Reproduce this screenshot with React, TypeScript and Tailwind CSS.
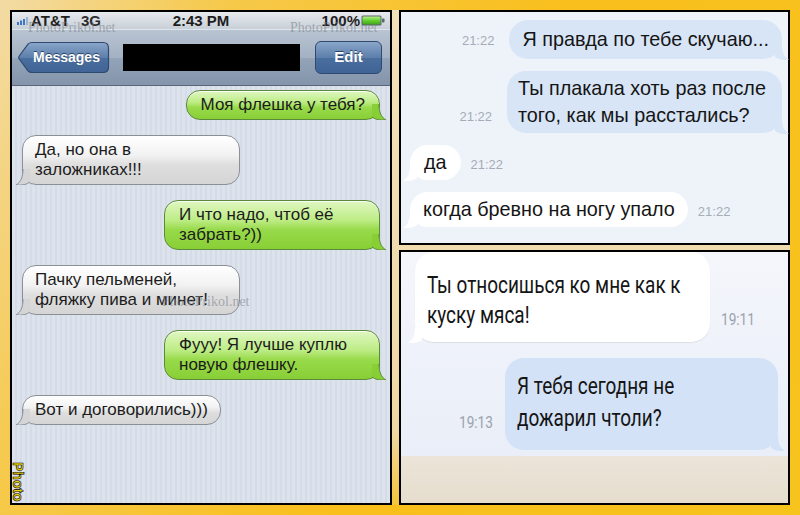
import React from 'react'

type Side = 'in' | 'out'

function Tail({ color, stroke, side }: { color: string; stroke?: string; side: Side }) {
    return (
        <svg
            viewBox="0 0 14 16"
            className={
                side === 'out'
                    ? 'pointer-events-none absolute right-[-7px] bottom-[-1px] h-[16px] w-[14px]'
                    : 'pointer-events-none absolute left-[-7px] bottom-[-1px] h-[16px] w-[14px] -scale-x-100'
            }
        >
            <path d="M0 0 H7 C7 8 9 13 14 16 C8 16.5 3 15.5 0 13 Z" fill={color} />
            {stroke && (
                <path d="M7 0 C7 8 9 13 14 16 C8 16.5 3 15.5 0 13" fill="none" stroke={stroke} strokeWidth="1" />
            )}
        </svg>
    )
}

function SignalBars() {
    return (
        <svg viewBox="0 0 12 8" className="h-[8px] w-[12px]">
            <rect x="0" y="5" width="2" height="3" fill="#3f76c6" />
            <rect x="3" y="3.5" width="2" height="4.5" fill="#3f76c6" />
            <rect x="6" y="2" width="2" height="6" fill="#3f76c6" />
            <rect x="9" y="0" width="2" height="8" fill="#9db3cf" />
        </svg>
    )
}

function Battery() {
    return (
        <svg viewBox="0 0 24 11" className="h-[11px] w-[24px]">
            <defs>
                <linearGradient id="bat" x1="0" y1="0" x2="0" y2="1">
                    <stop offset="0" stopColor="#b6f08a" />
                    <stop offset="0.5" stopColor="#63cf2e" />
                    <stop offset="1" stopColor="#3fa51a" />
                </linearGradient>
            </defs>
            <rect x="0.5" y="0.5" width="20" height="10" rx="1.5" fill="#5b6470" />
            <rect x="1.5" y="1.5" width="18" height="8" rx="1" fill="url(#bat)" />
            <rect x="21" y="3.5" width="2.5" height="4" rx="0.8" fill="#5b6470" />
        </svg>
    )
}

function BackButton() {
    return (
        <div className="relative h-[33px] w-[93px]">
            <svg viewBox="0 0 93 33" className="absolute inset-0 h-[33px] w-[93px]">
                <defs>
                    <linearGradient id="navbtn" x1="0" y1="0" x2="0" y2="1">
                        <stop offset="0" stopColor="#8aa6ca" />
                        <stop offset="0.5" stopColor="#5d7fab" />
                        <stop offset="0.52" stopColor="#4a6e9e" />
                        <stop offset="1" stopColor="#3f6495" />
                    </linearGradient>
                </defs>
                <path
                    d="M15 1.5 H86 Q91.5 1.5 91.5 7 V26 Q91.5 31.5 86 31.5 H15 Q12.5 31.5 11 29.8 L2.2 18 Q1 16.5 2.2 15 L11 3.2 Q12.5 1.5 15 1.5 Z"
                    fill="url(#navbtn)"
                    stroke="#2e4a70"
                    strokeWidth="1.2"
                />
            </svg>
            <span className="relative flex h-full items-center pl-[16px] text-[14px] font-bold text-white [text-shadow:0_-1px_0_#2a4366]">
                Messages
            </span>
        </div>
    )
}

function IosBubble({ side, w, children }: { side: Side; w?: string; children: React.ReactNode }) {
    if (side === 'out') {
        return (
            <div
                className={`relative mr-[10px] self-end rounded-[14px] border border-[#5c8a3c] bg-[linear-gradient(180deg,#e0f7c2_0%,#bdec85_40%,#98da4a_60%,#88cf36_100%)] px-[14px] py-[4px] text-[17px] leading-[20px] text-[#1c1c1c] shadow-[inset_0_1px_0_rgba(255,255,255,0.8)] ${w ?? ''}`}
            >
                {children}
                <Tail side="out" color="#88cf36" stroke="#5c8a3c" />
            </div>
        )
    }
    return (
        <div
            className={`relative ml-[10px] self-start rounded-[14px] border border-[#8b9097] bg-[linear-gradient(180deg,#ffffff_0%,#f2f2f2_40%,#dedede_60%,#d5d5d5_100%)] px-[12px] py-[4px] text-[17px] leading-[20px] text-[#1c1c1c] shadow-[inset_0_1px_0_#fff] ${w ?? ''}`}
        >
            {children}
            <Tail side="in" color="#d5d5d5" stroke="#8b9097" />
        </div>
    )
}

function Watermark({ className }: { className: string }) {
    return (
        <span
            className={`pointer-events-none absolute font-['Liberation_Serif',serif] text-[14px] leading-none text-[#7d838c]/60 ${className}`}
        >
            PhotoPrikol.net
        </span>
    )
}

function IphonePanel() {
    return (
        <div className="relative flex h-[495px] w-[382px] flex-col overflow-hidden border-2 border-black font-['Liberation_Sans',Arial,sans-serif]">
            <div className="grid h-[17px] grid-cols-3 items-center bg-[linear-gradient(180deg,#e7eaee,#c8cfd7)] px-[5px] text-[15px] leading-none font-bold text-[#1d1d1d]">
                <div className="flex items-center gap-[2px]">
                    <SignalBars />
                    <span>AT&amp;T</span>
                    <span className="ml-[9px] text-[#2c2c2c]">3G</span>
                </div>
                <div className="text-center">2:43 PM</div>
                <div className="flex items-center justify-end gap-[1px]">
                    <span>100%</span>
                    <Battery />
                </div>
            </div>
            <div className="flex h-[57px] items-center border-t border-b border-t-[#dfe5ec] border-b-[#56677e] bg-[linear-gradient(180deg,#b9c4d2_0%,#a3b1c3_50%,#93a3b8_52%,#8495ab_100%)] pl-[5px]">
                <BackButton />
                <div className="ml-[13px] h-[27px] w-[177px] bg-black" />
                <div className="ml-[15px] flex h-[33px] w-[67px] items-center justify-center rounded-[6px] border border-[#2e4a70] bg-[linear-gradient(180deg,#8aa6ca_0%,#5d7fab_50%,#4a6e9e_52%,#3f6495_100%)] text-[15px] font-bold text-white [text-shadow:0_-1px_0_#2a4366]">
                    Edit
                </div>
            </div>
            <div className="relative flex flex-1 flex-col gap-[15px] bg-[repeating-linear-gradient(90deg,#dce3ed_0px,#dce3ed_3px,#d5dce7_3px,#d5dce7_5px)] pt-[4px]">
                <IosBubble side="out">Моя флешка у тебя?</IosBubble>
                <IosBubble side="in" w="w-[218px]">
                    Да, но она в<br />заложниках!!!
                </IosBubble>
                <IosBubble side="out" w="w-[216px]">
                    И что надо, чтоб её<br />забрать?))
                </IosBubble>
                <IosBubble side="in" w="w-[218px]">
                    Пачку пельменей,<br />фляжку пива и минет!
                </IosBubble>
                <IosBubble side="out" w="w-[216px]">
                    Фууу! Я лучше куплю<br />новую флешку.
                </IosBubble>
                <IosBubble side="in">Вот и договорились)))</IosBubble>
                <span className="absolute bottom-[1px] left-0 text-[14px] leading-[12px] font-bold text-[#f2d400] [writing-mode:vertical-rl] [-webkit-text-stroke:0.6px_#000]">
                    Photo
                </span>
            </div>
            <Watermark className="top-[9px] left-[16px]" />
            <Watermark className="top-[9px] left-[278px]" />
            <Watermark className="top-[283px] left-[150px] text-[13px]" />
        </div>
    )
}

function ChatBubble({ side, className, tail, children }: { side: Side; className: string; tail: string; children: React.ReactNode }) {
    return (
        <div className={`relative rounded-[19px] text-[#151515] ${className}`}>
            {children}
            <Tail side={side} color={tail} />
        </div>
    )
}

function Time({ className, children }: { className: string; children: React.ReactNode }) {
    return <span className={`leading-none ${className}`}>{children}</span>
}

function TopPanel() {
    const time = 'text-[13px] text-[#a6acb5]'
    return (
        <div className="flex h-[235px] flex-col gap-[12px] border-2 border-black bg-[#eef3fa] pt-[8px] pr-[6px] pl-[9px] font-['Liberation_Sans',Arial,sans-serif] text-[19.8px]">
            <div className="flex items-end justify-end gap-[15px]">
                <Time className={`${time} mb-[12px]`}>21:22</Time>
                <ChatBubble side="out" tail="#d8e5f6" className="bg-[#d8e5f6] px-[13px] py-[8px] leading-[23px]">
                    Я правда по тебе скучаю...
                </ChatBubble>
            </div>
            <div className="flex items-end justify-end gap-[15px]">
                <Time className={`${time} mb-[10px]`}>21:22</Time>
                <ChatBubble side="out" tail="#d8e5f6" className="w-[275px] bg-[#d8e5f6] px-[11px] py-[4px] leading-[27px]">
                    Ты плакала хоть раз после
                    <br />
                    того, как мы расстались?
                </ChatBubble>
            </div>
            <div className="flex items-end gap-[10px]">
                <ChatBubble side="in" tail="#ffffff" className="bg-white px-[14px] py-[6px] leading-[23px]">
                    да
                </ChatBubble>
                <Time className={`${time} mb-[9px]`}>21:22</Time>
            </div>
            <div className="flex items-end gap-[10px]">
                <ChatBubble side="in" tail="#ffffff" className="bg-white px-[13px] py-[6px] leading-[23px]">
                    когда бревно на ногу упало
                </ChatBubble>
                <Time className={`${time} mb-[9px]`}>21:22</Time>
            </div>
        </div>
    )
}

function BottomPanel() {
    const time = 'text-[16px] text-[#9ba2ac] origin-center scale-x-[0.85]'
    const cond = 'origin-left scale-x-[0.79] whitespace-nowrap'
    return (
        <div className="flex h-[255px] flex-col border-2 border-black font-['Roboto','Liberation_Sans',sans-serif]">
            <div className="flex flex-1 flex-col gap-[16px] bg-[linear-gradient(180deg,#f4f6fb_0%,#e9eef8_100%)] pt-[0px] pr-[10px] pl-[14px] text-[24px] text-[#141414]">
                <div className="flex items-end gap-[8px]">
                    <ChatBubble side="in" tail="#ffffff" className="h-[90px] w-[295px] bg-white pt-[18px] pl-[12px] leading-[30px] shadow-[0_1px_1px_rgba(0,0,0,0.08)]">
                        <div className={cond}>
                            Ты относишься ко мне как к
                            <br />
                            куску мяса!
                        </div>
                    </ChatBubble>
                    <Time className={`${time} mb-[14px]`}>19:11</Time>
                </div>
                <div className="flex items-end justify-end gap-[9px]">
                    <Time className={`${time} mb-[19px]`}>19:13</Time>
                    <ChatBubble side="out" tail="#d3e2f6" className="h-[92px] w-[273px] bg-[#d3e2f6] pt-[12px] pl-[12px] leading-[32px]">
                        <div className={cond}>
                            Я тебя сегодня не
                            <br />
                            дожарил чтоли?
                        </div>
                    </ChatBubble>
                </div>
            </div>
            <div className="h-[47px] bg-[linear-gradient(180deg,#ebe4d8,#e6ddcd)]" />
        </div>
    )
}

export default function App() {
    return (
        <div className="h-[515px] w-[800px] bg-[linear-gradient(115deg,#f3dba5_0%,#f6c94a_22%,#f9bf1c_55%,#f7c31d_100%)] p-[10px]">
            <div className="flex h-full gap-[7px] bg-[linear-gradient(180deg,#f2e1ba_0%,#efd8a5_85%,#f5c53a_100%)]">
                <IphonePanel />
                <div className="flex w-[391px] flex-col gap-[5px]">
                    <TopPanel />
                    <BottomPanel />
                </div>
            </div>
        </div>
    )
}
